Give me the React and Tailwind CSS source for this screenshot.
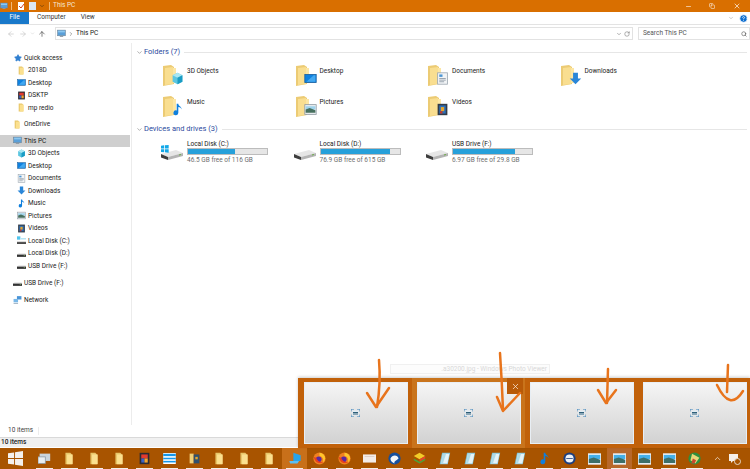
import { ChevronDown, ChevronRight, ChevronUp, ArrowLeft, ArrowRight, ArrowUp, RotateCw, Search, Minus, X, Copy, HelpCircle, Star } from 'lucide-react';

const font = { fontFamily: 'Roboto, "Noto Sans", sans-serif' };

const Monitor = ({ s = 9 }) => (
  <svg width={s} height={s} viewBox="0 0 16 16">
    <rect x="1" y="2" width="14" height="10" fill="#5a9fd8" stroke="#6f8496" />
    <rect x="2" y="3" width="12" height="3" fill="#8cc8f0" />
    <rect x="5" y="12" width="6" height="2" fill="#8a97a3" />
  </svg>
);

const Folder = ({ s = 9 }) => (
  <svg width={s} height={s} viewBox="0 0 16 16">
    <path d="M3 1h6l2 2v12H3z" fill="#e8c76a" />
    <path d="M5 3h7v12H5z" fill="#fbe08f" />
  </svg>
);

const Cube = ({ s = 9 }) => (
  <svg width={s} height={s} viewBox="0 0 16 16">
    <path d="M8 1l6 3v8l-6 3-6-3V4z" fill="#5cc6e0" />
    <path d="M8 1l6 3-6 3-6-3z" fill="#a9e6f2" />
    <path d="M8 7l6-3v8l-6 3z" fill="#1b9cc4" />
  </svg>
);

const Note = ({ s = 9 }) => (
  <svg width={s} height={s} viewBox="0 0 16 16">
    <path d="M7 1h2c0 3 4 3 4 7-1-2-2-3-4-3v7a3 3 0 1 1-2-2.8z" fill="#0f7fdc" />
  </svg>
);

const Down = ({ s = 9 }) => (
  <svg width={s} height={s} viewBox="0 0 16 16">
    <path d="M5 1h6v7h4l-7 7-7-7h4z" fill="#2a86d8" />
  </svg>
);

const Doc = ({ s = 9 }) => (
  <svg width={s} height={s} viewBox="0 0 16 16">
    <rect x="2" y="1" width="12" height="14" fill="#f2f4f6" stroke="#9aa5ae" />
    <rect x="4" y="3" width="4" height="3" fill="#4d96d4" />
    <path d="M4 8h8M4 10h8M4 12h6" stroke="#8794a0" />
  </svg>
);

const Pic = ({ s = 9 }) => (
  <svg width={s} height={s} viewBox="0 0 16 16">
    <rect x="1" y="2" width="14" height="12" fill="#e9edf0" stroke="#8e99a3" />
    <rect x="2" y="4" width="12" height="4" fill="#9fd3ec" />
    <path d="M2 8l5-2 7 3v3H2z" fill="#47705f" />
  </svg>
);

const Film = ({ s = 9 }) => (
  <svg width={s} height={s} viewBox="0 0 16 16">
    <rect x="2" y="1" width="12" height="14" fill="#333b47" />
    <rect x="4" y="3" width="8" height="10" fill="#2d70b8" />
    <path d="M6 5h4v5H6z" fill="#e8a52a" />
    <path d="M5 10h3v3H5z" fill="#c2372e" />
  </svg>
);

const Disk = ({ s = 9 }) => (
  <svg width={s} height={s} viewBox="0 0 24 24">
    <path d="M1 13l15-4 7 3-15 4z" fill="#e6e6e6" />
    <path d="M1 13l7 3v3l-7-2.500z" fill="#3d3d3d" />
    <path d="M8 16l15-4v3L8 19z" fill="#b4b4b4" />
    <path d="M19 14l2-.5" stroke="#6fb04a" />
  </svg>
);

const SmallDisk = ({ s = 9 }) => (
  <svg width={s} height={s} viewBox="0 0 16 16">
    <path d="M3 8h12l1 1v1H0V9.500z" fill="#d9d9d9" />
    <rect x="0" y="10" width="16" height="4" fill="#333333" />
    <rect x="12" y="11" width="2" height="1" fill="#8fd06a" />
  </svg>
);

const SmallWinDisk = ({ s = 9 }) => (
  <svg width={s} height={s} viewBox="0 0 16 16">
    <path d="M0 1h6v2H0zM0 4h6v2H0z" fill="#19b2e8" />
    <path d="M7 4h9v2H7z" fill="#9fdcf2" />
    <rect x="0" y="9" width="16" height="2" fill="#d9d9d9" />
    <rect x="0" y="11" width="16" height="3" fill="#333333" />
  </svg>
);

const WinDisk = ({ s = 9 }) => (
  <span className="relative inline-flex">
    <Disk s={s} />
    <svg className="absolute" style={{ left: s * 0.05, top: s * 0.16 }} width={s * 0.32} height={s * 0.32} viewBox="0 0 10 10">
      <path d="M0 1l4-.6V4.500H0zM5 .3L10 0v4.500H5zM0 5.500h4v4L0 9zM5 5.500h5V10l-5-.6z" fill="#12a8e8" />
    </svg>
  </span>
);

const Net = ({ s = 9 }) => (
  <svg width={s} height={s} viewBox="0 0 16 16">
    <rect x="7" y="2" width="8" height="6" fill="#4a94d6" />
    <rect x="1" y="7" width="8" height="6" fill="#79b8e8" />
    <path d="M1 15h8" stroke="#5d7d99" />
  </svg>
);

const Dsktp = ({ s = 9 }) => (
  <svg width={s} height={s} viewBox="0 0 16 16">
    <rect x="2" y="1" width="12" height="14" fill="#2b2b33" />
    <rect x="4" y="3" width="8" height="5" fill="#e23a2e" />
    <rect x="4" y="8" width="4" height="5" fill="#3b62c4" />
    <rect x="8" y="8" width="4" height="5" fill="#f2a52c" />
  </svg>
);

const DesktopTile = ({ s = 9 }) => (
  <svg width={s} height={s} viewBox="0 0 16 16">
    <rect x="1" y="3" width="14" height="10" fill="#0f82e0" stroke="#1a5f9e" />
    <path d="M3 12L12 4h2v8z" fill="#43a8f0" />
  </svg>
);

const sidebar = [
  { label: 'Quick access', Icon: () => <Star size={8} fill="#2f7fd0" color="#2f7fd0" />, top: true },
  { label: '2018D', Icon: Folder },
  { label: 'Desktop', Icon: DesktopTile },
  { label: 'DSKTP', Icon: Dsktp },
  { label: 'mp redio', Icon: Folder },
  { label: 'OneDrive', Icon: Folder, top: true, gap: 'mt-[4px]' },
  { label: 'This PC', Icon: Monitor, top: true, gap: 'mt-[4px]', selected: true },
  { label: '3D Objects', Icon: Cube },
  { label: 'Desktop', Icon: DesktopTile },
  { label: 'Documents', Icon: Doc },
  { label: 'Downloads', Icon: Down },
  { label: 'Music', Icon: Note },
  { label: 'Pictures', Icon: Pic },
  { label: 'Videos', Icon: Film },
  { label: 'Local Disk (C:)', Icon: SmallWinDisk },
  { label: 'Local Disk (D:)', Icon: SmallDisk },
  { label: 'USB Drive (F:)', Icon: SmallDisk },
  { label: 'USB Drive (F:)', Icon: SmallDisk, top: true, gap: 'mt-[4.500px]' },
  { label: 'Network', Icon: Net, top: true, gap: 'mt-[4.500px]' },
];

const folders = [
  ['3D Objects', Cube],
  ['Desktop', DesktopTile],
  ['Documents', Doc],
  ['Downloads', Down],
  ['Music', Note],
  ['Pictures', Pic],
  ['Videos', Film],
];

const drives = [
  { name: 'Local Disk (C:)', free: '46.5 GB free of 116 GB', fill: 'w-[47px]', Icon: WinDisk },
  { name: 'Local Disk (D:)', free: '76.9 GB free of 615 GB', fill: 'w-[69px]', Icon: Disk },
  { name: 'USB Drive (F:)', free: '6.97 GB free of 29.8 GB', fill: 'w-[62px]', Icon: Disk },
];

const SectionHead = ({ title }) => (
  <div className="flex items-center h-[10px] pl-[4px] pr-[3px]">
    <ChevronDown size={7} color="#7a7a7a" />
    <span className="ml-[1px] text-[7.500px] leading-none text-[#2b4a9e]">{title}</span>
    <div className="ml-[4px] flex-1 h-px bg-[#e6e6e6]" />
  </div>
);

const BigFolder = ({ Badge }) => (
  <div className="relative w-[21px] h-[21px]">
    <svg width="15" height="21" viewBox="0 0 15 21">
      <path d="M0 1l8-1 3 2v17l-11 2z" fill="#eccb74" />
      <path d="M2 3h11v15H2z" fill="#fce6a4" />
      <path d="M2 3L10 2v17L2 20z" fill="#f9de90" />
    </svg>
    <div className="absolute right-0 bottom-[1px]">
      <Badge s={13} />
    </div>
  </div>
);

const Firefox = () => (
  <svg width="13" height="13" viewBox="0 0 16 16">
    <circle cx="8" cy="8" r="7.500" fill="#f0801f" />
    <path d="M8 1a7 7 0 0 1 7 7 7 7 0 0 1-3 5c2-4-1-8-4-8z" fill="#ffc62b" />
    <circle cx="7" cy="9" r="3.500" fill="#5a2aa0" />
    <path d="M1 6c1 6 7 10 12 6-4 1-8-1-9-5z" fill="#e8401f" />
  </svg>
);

const Sheet = () => (
  <svg width="13" height="13" viewBox="0 0 16 16">
    <path d="M5 1h10l-3 14H2z" fill="#7fc3d8" />
    <path d="M6 2h8l-2.500 12H3.500z" fill="#e5f3f7" />
    <path d="M6 2h4L6 14H3.500z" fill="#aedbe8" />
  </svg>
);

const TaskPic = () => (
  <svg width="13" height="12" viewBox="0 0 16 14">
    <rect x="0" y="0" width="16" height="14" fill="#e6eef3" />
    <rect x="1" y="2" width="14" height="5" fill="#45b0e8" />
    <path d="M1 7l6-2 8 3v4H1z" fill="#3d6f68" />
  </svg>
);

const taskIcons = [
  <svg width="13" height="13" viewBox="0 0 16 16"><rect x="2" y="2" width="13" height="9" fill="#c9d4dc" /><rect x="0" y="6" width="9" height="8" fill="#e9eef1" stroke="#8d9aa3" /></svg>,
  <Folder s={13} />,
  <Folder s={13} />,
  <Folder s={13} />,
  <Dsktp s={13} />,
  <svg width="13" height="11" viewBox="0 0 16 14"><rect width="16" height="14" fill="#fff" /><rect y="1" width="16" height="3" fill="#1496e8" /><rect y="6" width="16" height="2" fill="#1496e8" /><rect y="10" width="16" height="2" fill="#1496e8" /></svg>,
  <svg width="13" height="13" viewBox="0 0 16 16"><path d="M2 2h5v12H2z" fill="#f0cf78" /><rect x="7" y="3" width="7" height="11" fill="#30506e" /><rect x="9" y="6" width="3" height="3" fill="#e8a52a" /></svg>,
  <Folder s={13} />,
  <Folder s={13} />,
  <Folder s={13} />,
  <svg width="14" height="13" viewBox="0 0 16 16"><path d="M6 1l9 3v7H6z" fill="#28a4ea" /><path d="M1 11h12l-2 3H2z" fill="#5cc0f2" /></svg>,
  <Firefox />,
  <Firefox />,
  <svg width="13" height="9" viewBox="0 0 16 10"><rect width="16" height="10" fill="#f3ece8" /><rect x="2" y="2" width="12" height="1" fill="#d9c9c0" /></svg>,
  <svg width="13" height="13" viewBox="0 0 16 16"><circle cx="8" cy="8" r="7.500" fill="#164f9c" /><path d="M3 8c2-5 9-5 10 0-3 3-6 3-5 6-3-1-5-3-5-6z" fill="#f3f6fa" /></svg>,
  <svg width="13" height="13" viewBox="0 0 16 16"><path d="M8 1l7 4-7 4-7-4z" fill="#f2cc28" /><path d="M1 8l7 4 7-4v2l-7 4-7-4z" fill="#4aa63a" /><path d="M8 9l7-4v3l-7 4z" fill="#e2482c" /></svg>,
  <Sheet />,
  <Sheet />,
  <Sheet />,
  <Sheet />,
  <Note s={13} />,
  <svg width="13" height="13" viewBox="0 0 16 16"><circle cx="8" cy="8" r="7.500" fill="#1d3f7e" /><circle cx="8" cy="8" r="5" fill="#eef2f5" /><path d="M4 8h8" stroke="#1d3f7e" /></svg>,
  <TaskPic />,
  <TaskPic />,
  <TaskPic />,
  <TaskPic />,
  <svg width="13" height="13" viewBox="0 0 16 16"><circle cx="8" cy="8" r="7.500" fill="#2f8f3e" /><path d="M5 2l9 5-5 7-6-4z" fill="#e8d878" /><path d="M6 8l4 2-2 4H4z" fill="#c9472e" /></svg>,
];

const Thumb = ({ hot }) => (
  <div className={`flex-none w-[113px] h-[70px] px-[4.500px] pt-[4px] ${hot ? 'bg-[#c9741c]' : ''}`}>
    <div className="h-[62px] border border-[#e8eef4] bg-gradient-to-b from-[#f5f5f5] to-[#d2d2d2] flex items-center justify-center">
      <svg width="9" height="8" viewBox="0 0 9 8">
        <rect x="1.500" y="1.500" width="6" height="5" fill="#e4eef5" />
        <path d="M0 2.500V0h3M6 0h3v2.500M9 5.500V8H6M3 8H0V5.500" stroke="#3f86bd" fill="none" />
        <path d="M2 3.500h5M2 5h5" stroke="#2e5f78" />
      </svg>
    </div>
  </div>
);

export default function App() {
  return (
    <div className="relative w-[750px] h-[469px] overflow-hidden bg-white flex flex-col text-[#1a1a1a]" style={font}>
      {/* title bar */}
      <div className="h-[12px] flex-none bg-[#d96f00] flex items-center text-[#f7e6d2] text-[6.500px]">
        <Monitor s={8} />
        <div className="ml-[3px] w-px h-[8px] bg-[#f0b878]" />
        <svg className="ml-[6px]" width="7" height="8" viewBox="0 0 7 8"><rect width="6" height="8" fill="#fff" /><path d="M1 4l2 2 3-4" stroke="#d0452a" fill="none" /></svg>
        <svg className="ml-[4px]" width="7" height="8" viewBox="0 0 7 8"><rect width="7" height="8" fill="#dce8f4" /></svg>
        <ChevronDown className="ml-[3px]" size={6} color="#3a2a10" />
        <div className="ml-[4px] w-px h-[8px] bg-[#f0b878]" />
        <span className="ml-[3px]">This PC</span>
        <div className="ml-auto flex items-center text-white">
          <div className="w-[24px] flex justify-center"><Minus size={7} /></div>
          <div className="w-[24px] flex justify-center"><Copy size={6} /></div>
          <div className="w-[26px] flex justify-center"><X size={8} /></div>
        </div>
      </div>

      {/* ribbon tabs */}
      <div className="h-[13px] flex-none border-b border-[#e3e3e3] flex items-center text-[6.500px] text-[#333]">
        <div className="w-[29px] h-[12px] bg-[#1979ca] text-white flex items-center justify-center">File</div>
        <span className="ml-[8px]">Computer</span>
        <span className="ml-[15px]">View</span>
        <ChevronDown className="ml-auto" size={6} color="#9a9a9a" />
        <HelpCircle className="ml-[5px] mr-[2px]" size={9} color="#fff" fill="#0f6fd0" />
      </div>

      {/* address bar */}
      <div className="h-[18px] flex-none flex items-center pb-[1px]">
        <div className="w-[55px] flex items-center pl-[7px] text-[#c4c4c4]">
          <ArrowLeft size={8} />
          <ArrowRight className="ml-[4px]" size={8} />
          <ChevronDown className="ml-[3px]" size={5} />
          <ArrowUp className="ml-[3px]" size={8} color="#444" />
        </div>
        <div className="w-[578px] h-[13px] border border-[#e2e2e2] flex items-center pl-[1px] text-[6.500px]">
          <Monitor s={9} />
          <ChevronRight className="ml-[2px]" size={6} color="#555" />
          <span className="ml-[2px]">This PC</span>
          <ChevronDown className="ml-auto" size={6} color="#666" />
          <RotateCw className="ml-[2px] mr-[2px]" size={6} color="#666" />
        </div>
        <div className="ml-[5px] flex-1 h-[13px] border border-[#e2e2e2] flex items-center pl-[4px] pr-[2px] text-[6.500px] text-[#555]">
          <span>Search This PC</span>
          <Search className="ml-auto" size={6} color="#333" />
        </div>
      </div>

      {/* body */}
      <div className="flex-1 flex min-h-0">
        <div className="w-[132px] flex-none border-r border-[#ececec] pt-[8.500px]">
          {sidebar.map((item, i) => (
            <div
              key={i}
              className={`h-[12.500px] flex items-center text-[6.500px] leading-none ${item.top ? 'pl-[13px]' : 'pl-[17px]'} ${item.gap || ''} ${item.selected ? 'bg-[#cfcfcf] mr-[1px]' : ''}`}
            >
              <div className="w-[9px] flex justify-center"><item.Icon s={9} /></div>
              <span className="ml-[2px]">{item.label}</span>
            </div>
          ))}
        </div>

        <div className="flex-1 pt-[4px]">
          <SectionHead title="Folders (7)" />
          <div className="grid grid-cols-[132.500px_132.500px_132.500px_132.500px] grid-rows-[31px_28px] mt-[8px] pl-[31px]">
            {folders.map(([name, Badge]) => (
              <div key={name} className="flex items-start">
                <BigFolder Badge={Badge} />
                <span className="ml-[3px] mt-[2px] text-[6.500px] leading-[9px]">{name}</span>
              </div>
            ))}
          </div>
          <SectionHead title="Devices and drives (3)" />
          <div className="grid grid-cols-[132.500px_132.500px_132.500px] mt-[5px] pl-[28px]">
            {drives.map((d) => (
              <div key={d.name} className="flex items-start">
                <div className="w-[24px] mt-[2px]"><d.Icon s={24} /></div>
                <div className="ml-[3px] w-[81px]">
                  <div className="pt-[1px] text-[6.500px] leading-[8px]">{d.name}</div>
                  <div className="h-[7px] border border-[#bcbcbc] bg-[#e6e6e6]">
                    <div className={`h-full bg-[#26a0da] ${d.fill}`} />
                  </div>
                  <div className="pt-[1px] text-[6.500px] leading-[9px] text-[#6d6d6d]">{d.free}</div>
                </div>
              </div>
            ))}
          </div>
        </div>
      </div>

      {/* status bars */}
      <div className="h-[12px] flex-none flex items-center text-[6.500px] text-[#444] pl-[8px]">
        <span>10 items</span>
        <div className="ml-[5px] w-px h-[8px] bg-[#ececec]" />
      </div>
      <div className="h-[11px] flex-none bg-[#f0f0f0] border-t border-[#d9d9d9] border-b-white border-b flex items-center pl-[1px] text-[6.500px] font-medium text-[#222]">
        10 items
      </div>

      {/* taskbar */}
      <div className="h-[21px] flex-none bg-[#a85400] flex items-stretch">
        <div className="w-[32px] flex-none flex items-center pl-[8px]">
          <svg width="15" height="15" viewBox="0 0 16 16">
            <path d="M0 2.500l6.500-1v6H0zM7.500 1.300L16 0v7.500H7.500zM0 8.500h6.500v6l-6.500-1zM7.500 8.500H16V16l-8.500-1.300z" fill="#f4f1ee" />
          </svg>
        </div>
        {taskIcons.map((icon, i) => (
          <div key={i} className={`w-[25px] flex-none relative flex items-center justify-center ${i === 10 ? 'bg-[#c8701a]' : ''} ${i === 23 ? 'bg-[#b8682a]' : ''}`}>
            {icon}
            <div className="absolute bottom-0 left-[4px] right-[4px] h-px bg-[#f4efe9]" />
          </div>
        ))}
        <div className="w-[18px] flex-none flex items-center justify-center ml-[1px]"><ChevronUp size={9} color="#f2e6d8" /></div>
        <div className="w-[17px] flex-none flex items-center justify-center relative">
          <svg width="12" height="12" viewBox="0 0 12 12">
            <path d="M0 1h9v7H4L2 10V8H0z" fill="#f6efe8" />
            <circle cx="8.500" cy="8.500" r="3" fill="#a85400" stroke="#e5d8c8" />
          </svg>
        </div>
      </div>

      {/* ghost tooltip */}
      <div className="absolute left-[390px] top-[364px] w-[160px] h-[10px] bg-[#fcfcfc] border border-[#f0f0f0] text-[6.500px] leading-[8px] text-[#d8d8d8] text-right pr-[2px]">
        .a30200.jpg - Windows Photo Viewer
      </div>

      {/* thumbnail preview */}
      <div className="absolute left-[298px] top-[378px] w-[452px] h-[70px] bg-[#c1610a] pl-[1px] flex shadow-[0_-1px_3px_rgba(0,0,0,0.2)]">
        <Thumb />
        <Thumb hot />
        <Thumb />
        <Thumb />
      </div>
      <div className="absolute left-[507px] top-[378px] w-[16px] h-[16px] bg-[#b85a08] flex items-center justify-center">
        <X size={9} color="#f5e5d5" />
      </div>

      {/* hand drawn arrows */}
      <svg className="absolute left-0 top-0 pointer-events-none" width="750" height="469" viewBox="0 0 750 469" fill="none" stroke="#e8741c" strokeWidth="2.500" strokeLinecap="round" strokeLinejoin="round">
        <path d="M379 360Q381 383 377 407" />
        <path d="M367 393L376 407L389 388" />
        <path d="M500 353Q502 383 503 410" />
        <path d="M497 397L503 411L520 393" />
        <path d="M608 369L607 403" />
        <path d="M598 390L606 403L616 390" />
        <path d="M728 365L727 392" />
        <path d="M717 385Q730 412 743 391" />
      </svg>
    </div>
  );
}
